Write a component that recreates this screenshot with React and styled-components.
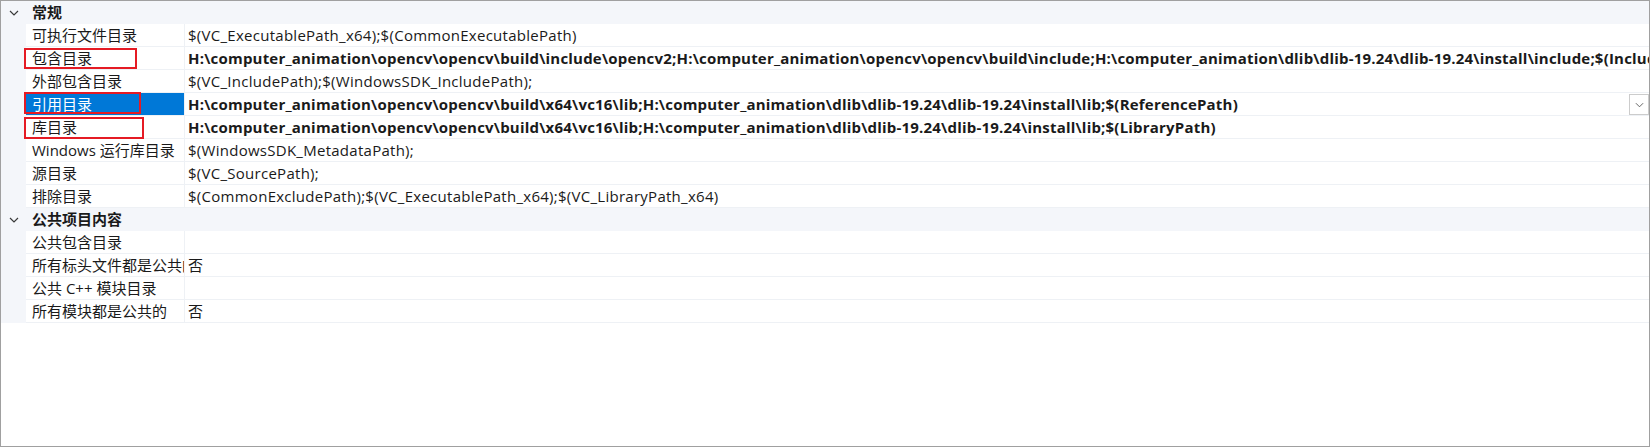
import React from 'react';
import styled, { createGlobalStyle } from 'styled-components';

const Global = createGlobalStyle`
  html, body { margin: 0; padding: 0; background: #ffffff; }
`;

const FONT = `"Open Sans", "Noto Sans CJK SC", sans-serif`;

const Frame = styled.div`
  box-sizing: border-box;
  width: 1650px;
  height: 447px;
  border: 1px solid #a0a0a0;
  background: #ffffff;
  overflow: hidden;
  display: flex;
  flex-direction: column;
  font-family: ${FONT};
  font-size: 15px;
  color: #1a1a1a;
`;

const CategoryRow = styled.div`
  display: flex;
  align-items: center;
  height: 23px;
  background: #f4f6fa;
`;

const Toggle = styled.span`
  width: 25px;
  height: 23px;
  display: flex;
  align-items: center;
  justify-content: center;
`;

const CategoryLabel = styled.span`
  font-weight: 700;
  padding-left: 6px;
  line-height: 23px;
`;

const ItemRow = styled.div`
  position: relative;
  display: grid;
  grid-template-columns: 25px 158px 1fr;
  height: 23px;
`;

const Gutter = styled.div`
  background: #f4f6fa;
`;

const NameCell = styled.div`
  box-sizing: border-box;
  height: 23px;
  padding-left: 6px;
  border-bottom: 1px solid #eef1f5;
  background: ${p => (p.$selected ? '#0078d7' : '#ffffff')};
  color: ${p => (p.$selected ? '#ffffff' : '#1a1a1a')};
  white-space: nowrap;
  overflow: hidden;
  line-height: 22px;
`;

const ValueCell = styled.div`
  box-sizing: border-box;
  height: 23px;
  display: flex;
  align-items: center;
  border-left: 1px solid #eef1f5;
  border-bottom: 1px solid #eef1f5;
  padding-left: 3px;
  overflow: hidden;
  min-width: 0;
`;

const ValueText = styled.span`
  flex: 1;
  min-width: 0;
  white-space: nowrap;
  overflow: hidden;
  font-weight: ${p => (p.$bold ? 700 : 400)};
  letter-spacing: ${p => (p.$bold ? '0.2px' : '0.27px')};
  line-height: 22px;
`;

const DropButton = styled.span`
  box-sizing: border-box;
  flex: none;
  width: 20px;
  height: 21px;
  margin-top: 1px;
  border: 1px solid #cccccc;
  background: #ffffff;
  display: flex;
  align-items: center;
  justify-content: center;
`;

const Highlight = styled.div`
  position: absolute;
  box-sizing: border-box;
  left: 23px;
  top: ${p => p.$top}px;
  width: ${p => p.$width}px;
  height: ${p => p.$height}px;
  border: 2px solid #e51b24;
  pointer-events: none;
`;

const Chevron = ({ size = 9, color = '#333', stroke = 1.3 }) => (
  <svg width={size} height={Math.ceil(size / 2) + 1} viewBox="0 0 10 6" fill="none">
    <path d="M1 1 L5 5 L9 1" stroke={color} strokeWidth={stroke} />
  </svg>
);

const Category = ({ label }) => (
  <CategoryRow>
    <Toggle>
      <Chevron size={10} color="#3a3a3a" stroke={1.2} />
    </Toggle>
    <CategoryLabel>{label}</CategoryLabel>
  </CategoryRow>
);

const Item = ({ name, value, bold, selected, highlight }) => (
  <ItemRow>
    <Gutter />
    <NameCell $selected={selected}>{name}</NameCell>
    <ValueCell>
      <ValueText $bold={bold}>{value}</ValueText>
      {selected && (
        <DropButton>
          <Chevron size={9} color="#555" stroke={1} />
        </DropButton>
      )}
    </ValueCell>
    {highlight && (
      <Highlight $top={highlight.top} $width={highlight.width} $height={highlight.height} />
    )}
  </ItemRow>
);

const general = [
  { name: '可执行文件目录', value: '$(VC_ExecutablePath_x64);$(CommonExecutablePath)' },
  {
    name: '包含目录',
    bold: true,
    value:
      'H:\\computer_animation\\opencv\\opencv\\build\\include\\opencv2;H:\\computer_animation\\opencv\\opencv\\build\\include;H:\\computer_animation\\dlib\\dlib-19.24\\dlib-19.24\\install\\include;$(IncludePath)',
    highlight: { top: 1, width: 113, height: 21 },
  },
  { name: '外部包含目录', value: '$(VC_IncludePath);$(WindowsSDK_IncludePath);' },
  {
    name: '引用目录',
    bold: true,
    selected: true,
    value:
      'H:\\computer_animation\\opencv\\opencv\\build\\x64\\vc16\\lib;H:\\computer_animation\\dlib\\dlib-19.24\\dlib-19.24\\install\\lib;$(ReferencePath)',
    highlight: { top: -1, width: 117, height: 22 },
  },
  {
    name: '库目录',
    bold: true,
    value:
      'H:\\computer_animation\\opencv\\opencv\\build\\x64\\vc16\\lib;H:\\computer_animation\\dlib\\dlib-19.24\\dlib-19.24\\install\\lib;$(LibraryPath)',
    highlight: { top: 1, width: 120, height: 22 },
  },
  { name: 'Windows 运行库目录', value: '$(WindowsSDK_MetadataPath);' },
  { name: '源目录', value: '$(VC_SourcePath);' },
  { name: '排除目录', value: '$(CommonExcludePath);$(VC_ExecutablePath_x64);$(VC_LibraryPath_x64)' },
];

const common = [
  { name: '公共包含目录', value: '' },
  { name: '所有标头文件都是公共的', value: '否' },
  { name: '公共 C++ 模块目录', value: '' },
  { name: '所有模块都是公共的', value: '否' },
];

export default function App() {
  return (
    <>
      <Global />
      <Frame>
        <Category label="常规" />
        {general.map(it => (
          <Item key={it.name} {...it} />
        ))}
        <Category label="公共项目内容" />
        {common.map(it => (
          <Item key={it.name} {...it} />
        ))}
      </Frame>
    </>
  );
}
